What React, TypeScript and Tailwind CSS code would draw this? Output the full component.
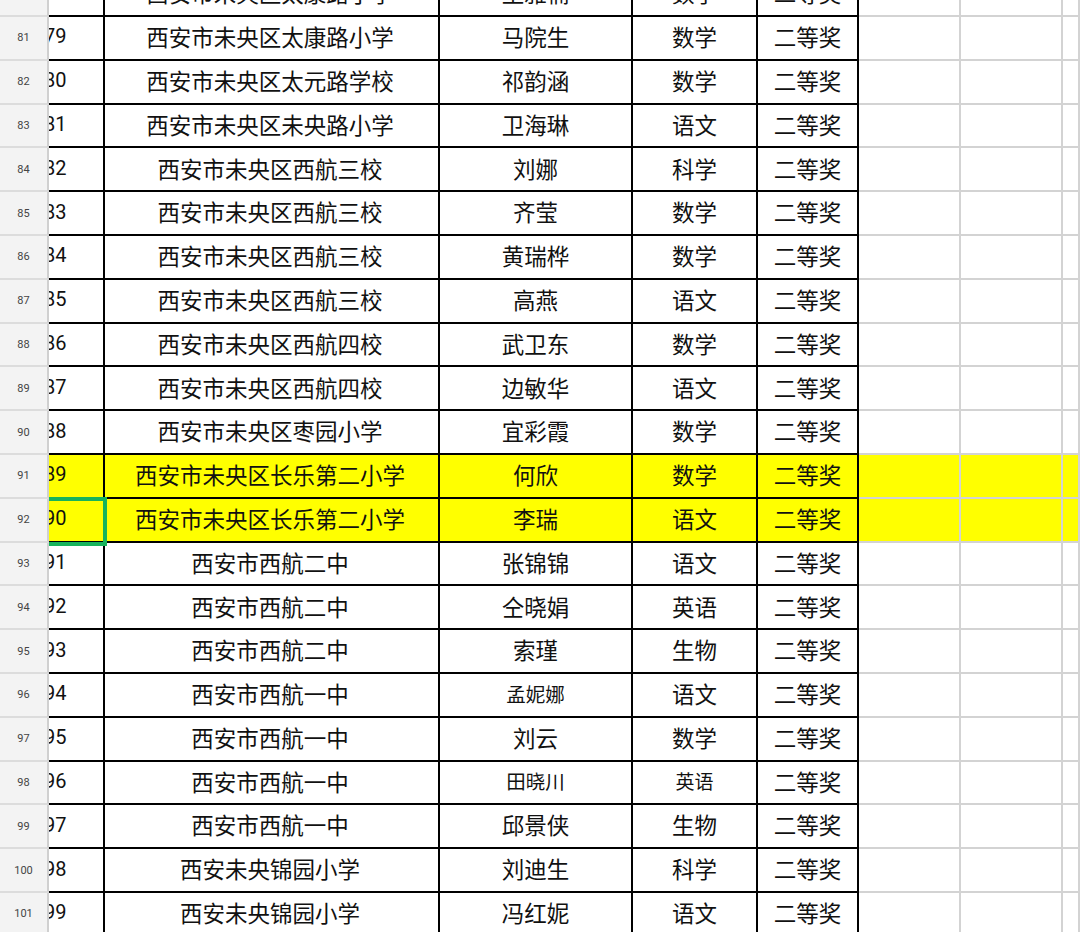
const rows = [
  { n: 80, a: "78", school: "西安市未央区太康路小学", name: "王雅楠", subject: "数学" },
  { n: 81, a: "79", school: "西安市未央区太康路小学", name: "马院生", subject: "数学" },
  { n: 82, a: "80", school: "西安市未央区太元路学校", name: "祁韵涵", subject: "数学" },
  { n: 83, a: "81", school: "西安市未央区未央路小学", name: "卫海琳", subject: "语文" },
  { n: 84, a: "82", school: "西安市未央区西航三校", name: "刘娜", subject: "科学" },
  { n: 85, a: "83", school: "西安市未央区西航三校", name: "齐莹", subject: "数学" },
  { n: 86, a: "84", school: "西安市未央区西航三校", name: "黄瑞桦", subject: "数学" },
  { n: 87, a: "85", school: "西安市未央区西航三校", name: "高燕", subject: "语文" },
  { n: 88, a: "86", school: "西安市未央区西航四校", name: "武卫东", subject: "数学" },
  { n: 89, a: "87", school: "西安市未央区西航四校", name: "边敏华", subject: "语文" },
  { n: 90, a: "88", school: "西安市未央区枣园小学", name: "宜彩霞", subject: "数学" },
  { n: 91, a: "89", school: "西安市未央区长乐第二小学", name: "何欣", subject: "数学", hl: true },
  { n: 92, a: "90", school: "西安市未央区长乐第二小学", name: "李瑞", subject: "语文", hl: true, sel: true },
  { n: 93, a: "91", school: "西安市西航二中", name: "张锦锦", subject: "语文" },
  { n: 94, a: "92", school: "西安市西航二中", name: "仝晓娟", subject: "英语" },
  { n: 95, a: "93", school: "西安市西航二中", name: "索瑾", subject: "生物" },
  { n: 96, a: "94", school: "西安市西航一中", name: "孟妮娜", subject: "语文", smallName: true },
  { n: 97, a: "95", school: "西安市西航一中", name: "刘云", subject: "数学" },
  { n: 98, a: "96", school: "西安市西航一中", name: "田晓川", subject: "英语", smallName: true, smallSubject: true },
  { n: 99, a: "97", school: "西安市西航一中", name: "邱景侠", subject: "生物" },
  { n: 100, a: "98", school: "西安未央锦园小学", name: "刘迪生", subject: "科学" },
  { n: 101, a: "99", school: "西安未央锦园小学", name: "冯红妮", subject: "语文" },
]

type Row = (typeof rows)[number] & { hl?: boolean; sel?: boolean; smallName?: boolean; smallSubject?: boolean }

function SheetRow({ row }: { row: Row }) {
  const bg = row.hl ? "bg-[#ffff00]" : "bg-white"
  const cell = `flex h-full shrink-0 items-center justify-center border-b-2 border-r-2 border-black pb-[3px] ${bg}`
  const grid = `h-full shrink-0 border-b-2 border-r-2 border-[#d3d3d3] ${bg}`

  return (
    <div className="relative flex h-[43.8px] w-full">
      {/* row header */}
      <div className="relative z-10 flex h-full w-[49px] shrink-0 items-center justify-center border-b-2 border-r-2 border-b-[#dcdcdc] border-r-[#d0d0d0] bg-[#f3f3f3] font-['Roboto',sans-serif] text-[11px] text-[#444]">
        {row.n}
      </div>
      <div className={`flex h-full w-[56px] shrink-0 items-center overflow-hidden border-b-2 border-r-2 border-black pb-[3px] ${bg}`}>
        <span className="-ml-[5px] font-['Roboto',sans-serif] text-[20px] text-[#111]">{row.a}</span>
      </div>
      <div className={`${cell} w-[335px] pr-[3px] text-[22.5px]`}>{row.school}</div>
      <div className={`${cell} w-[193px] ${row.smallName ? "text-[19.5px]" : "text-[22.5px]"}`}>{row.name}</div>
      <div className={`${cell} w-[125px] ${row.smallSubject ? "text-[19px]" : "text-[22.5px]"}`}>{row.subject}</div>
      <div className={`${cell} w-[101px] text-[22.5px]`}>二等奖</div>
      <div className={`${grid} w-[102px]`} />
      <div className={`${grid} w-[102px]`} />
      <div className={`${grid} flex-1`} />

      {/* selected cell, left edge hides under the row header */}
      {row.sel && (
        <div className="pointer-events-none absolute -top-[2px] left-[44px] z-[5] h-[49px] w-[63px] border-4 border-solid border-[#17b35b]" />
      )}
    </div>
  )
}

export default function App() {
  return (
    <div className="h-[932px] w-[1080px] overflow-hidden bg-white font-['Noto_Sans_CJK_SC','Noto_Sans',sans-serif] leading-none text-[#111]">
      <div className="-mt-[26.8px] flex flex-col">
        {rows.map((row) => (
          <SheetRow key={row.n} row={row as Row} />
        ))}
      </div>
    </div>
  )
}
